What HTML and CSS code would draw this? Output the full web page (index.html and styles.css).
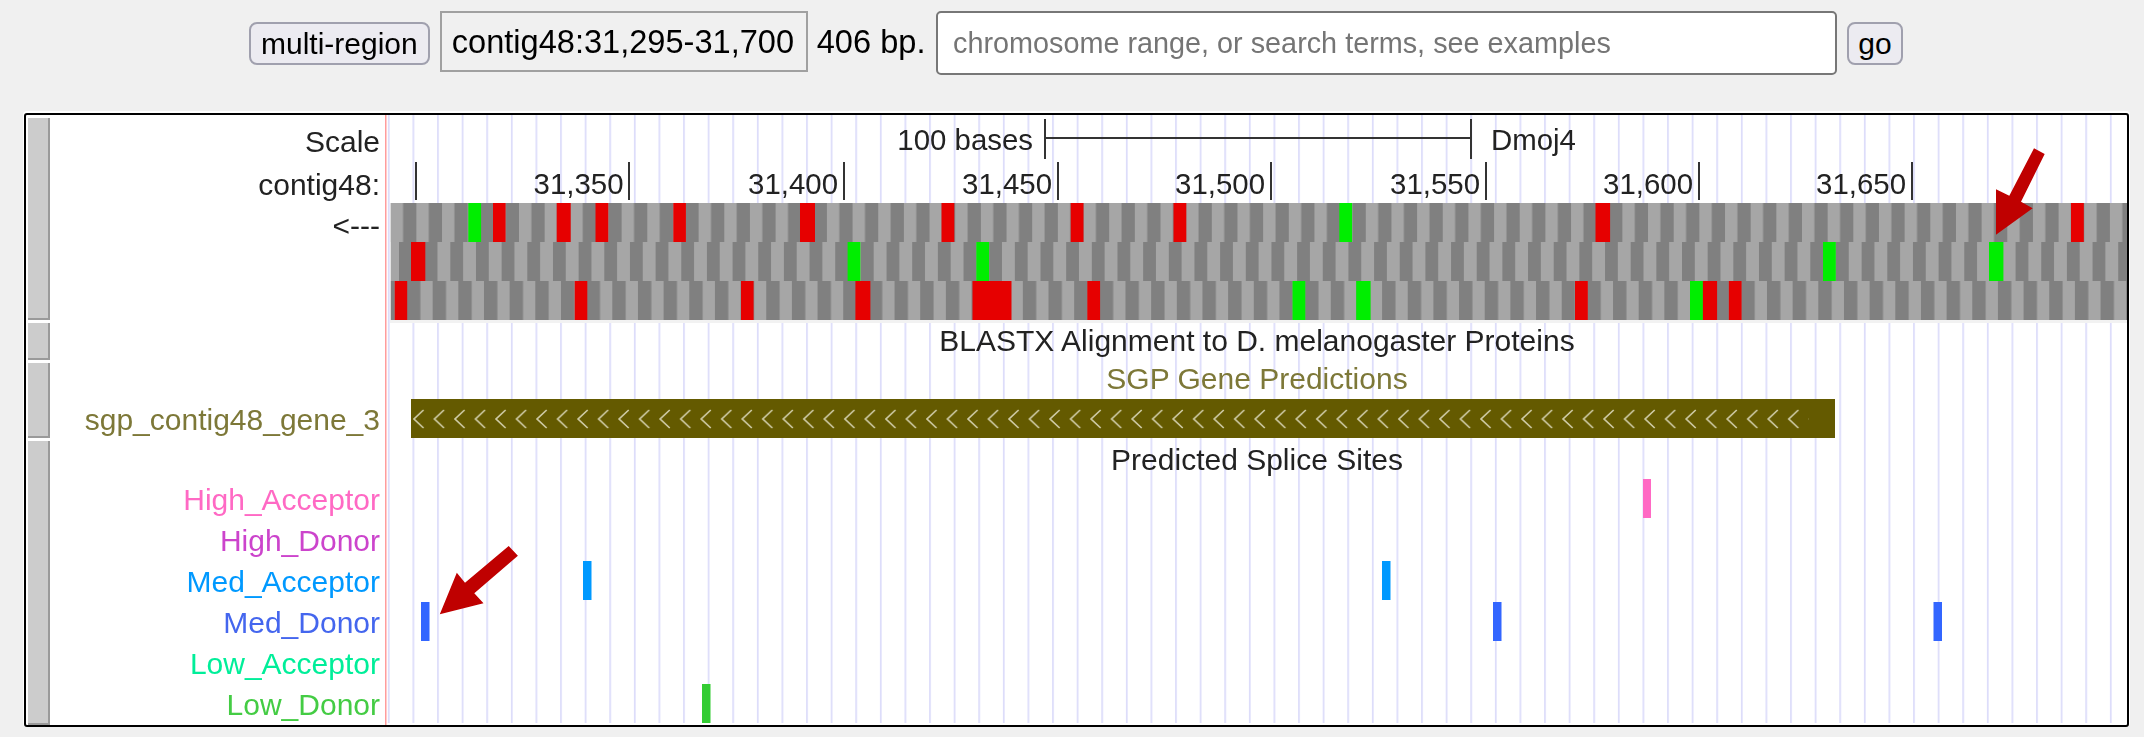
FILE: index.html
```html
<!doctype html>
<html>
<head>
<meta charset="utf-8">
<title>Genome browser</title>
<link rel="stylesheet" href="styles.css">
</head>
<body>

<form class="position-bar">
  <button type="button" class="btn">multi-region</button>
  <span class="position">contig48:31,295-31,700</span>
  <span class="size">406 bp.</span>
  <input class="search" type="text" placeholder="chromosome range, or search terms, see examples">
  <button type="button" class="btn go">go</button>
</form>

<div class="browser">
  <div class="side">
    <div class="side-btn h-base"></div>
    <div class="side-btn h-blastx"></div>
    <div class="side-btn h-sgp"></div>
    <div class="side-btn h-splice"></div>
  </div>

  <div class="labels">
    <div class="label first">Scale</div>
    <div class="label">contig48:</div>
    <div class="label">&lt;---</div>
    <div class="label gene-label">sgp_contig48_gene_3</div>
    <div class="label high-acc splice-start">High_Acceptor</div>
    <div class="label high-don">High_Donor</div>
    <div class="label med-acc">Med_Acceptor</div>
    <div class="label med-don">Med_Donor</div>
    <div class="label low-acc">Low_Acceptor</div>
    <div class="label low-don">Low_Donor</div>
  </div>

  <!-- viewBox uses the page's own coordinates, makes measuring easier -->
  <svg class="tracks" width="1742" height="610" viewBox="385 115 1742 610">
    <defs>
      <pattern id="guides" patternUnits="userSpaceOnUse" x="412.5" y="0" width="24.6" height="10">
        <rect width="1.7" height="10" fill="#dcdcfa"/>
      </pattern>
      <pattern id="frame1" patternUnits="userSpaceOnUse" x="390.7" y="203" width="25.66" height="39">
        <rect width="25.66" height="39" fill="#808080"/>
        <rect width="12.4" height="39" fill="#a6a6a6"/>
      </pattern>
      <pattern id="frame2" patternUnits="userSpaceOnUse" x="399" y="242" width="25.66" height="39">
        <rect width="25.66" height="39" fill="#a6a6a6"/>
        <rect width="12.8" height="39" fill="#808080"/>
      </pattern>
      <pattern id="frame3" patternUnits="userSpaceOnUse" x="407" y="281" width="25.66" height="39">
        <rect width="25.66" height="39" fill="#a6a6a6"/>
        <rect width="13.4" height="39" fill="#808080"/>
      </pattern>
      <pattern id="chevrons" patternUnits="userSpaceOnUse" x="413" y="399" width="20.52" height="39">
        <path d="M10.5 11 1 20l9.5 9" fill="none" stroke="#d0cca8" stroke-width="1.6"/>
      </pattern>
    </defs>

    <rect class="guides" x="385" y="115" width="1742" height="608"/>
    <rect class="base-line" x="385" y="115" width="1.5" height="610"/>

    <!-- scale bar -->
    <text class="txt end" x="1033" y="150">100 bases</text>
    <path class="rule" d="M1045 119v40M1045 138H1471M1471 119v40"/>
    <text class="txt" x="1491" y="150">Dmoj4</text>

    <!-- base position -->
    <path class="rule" d="M416 162v38M629 162v38M844 162v38M1058 162v38M1271 162v38M1486 162v38M1699 162v38M1912 162v38"/>
    <g class="ticks">
      <text class="txt end" x="623.5" y="194">31,350</text>
      <text class="txt end" x="838" y="194">31,400</text>
      <text class="txt end" x="1052" y="194">31,450</text>
      <text class="txt end" x="1265" y="194">31,500</text>
      <text class="txt end" x="1480" y="194">31,550</text>
      <text class="txt end" x="1693" y="194">31,600</text>
      <text class="txt end" x="1906" y="194">31,650</text>
    </g>

    <!-- codons -->
    <rect class="fade" x="390" y="320" width="1737" height="3"/>
    <rect x="390.7" y="203" width="1736.3" height="39" fill="url(#frame1)"/>
    <rect x="390.7" y="242" width="1736.3" height="39" fill="url(#frame2)"/>
    <rect x="390.7" y="281" width="1736.3" height="39" fill="url(#frame3)"/>

    <g class="stop">
      <rect x="493" y="203" width="12.6" height="39"/>
      <rect x="556.7" y="203" width="14" height="39"/>
      <rect x="595.5" y="203" width="12.8" height="39"/>
      <rect x="673.3" y="203" width="12.6" height="39"/>
      <rect x="800" y="203" width="15" height="39"/>
      <rect x="941.5" y="203" width="12.8" height="39"/>
      <rect x="1070.7" y="203" width="12.8" height="39"/>
      <rect x="1173.5" y="203" width="12.8" height="39"/>
      <rect x="1595.5" y="203" width="14.6" height="39"/>
      <rect x="2071" y="203" width="12.8" height="39"/>
      <rect x="411" y="242" width="14.3" height="39"/>
      <rect x="394.7" y="281" width="12.5" height="39"/>
      <rect x="574.7" y="281" width="12.6" height="39"/>
      <rect x="741" y="281" width="12.6" height="39"/>
      <rect x="855.4" y="281" width="15" height="39"/>
      <rect x="972.5" y="281" width="39" height="39"/>
      <rect x="1087.3" y="281" width="12.8" height="39"/>
      <rect x="1575" y="281" width="12.8" height="39"/>
      <rect x="1702.5" y="281" width="14.6" height="39"/>
      <rect x="1728.8" y="281" width="12.8" height="39"/>
    </g>
    <g class="start">
      <rect x="468.3" y="203" width="12.8" height="39"/>
      <rect x="1339.3" y="203" width="12.8" height="39"/>
      <rect x="847.6" y="242" width="12.8" height="39"/>
      <rect x="976.3" y="242" width="12.8" height="39"/>
      <rect x="1823" y="242" width="12.8" height="39"/>
      <rect x="1989" y="242" width="14.4" height="39"/>
      <rect x="1292.5" y="281" width="12.8" height="39"/>
      <rect x="1356.2" y="281" width="14.4" height="39"/>
      <rect x="1690" y="281" width="12.8" height="39"/>
    </g>

    <text class="txt mid" x="1257" y="351">BLASTX Alignment to D. melanogaster Proteins</text>
    <text class="txt mid sgp" x="1257" y="389">SGP Gene Predictions</text>

    <rect class="gene" x="411" y="399" width="1424" height="39"/>
    <rect x="413" y="399" width="1395.4" height="39" fill="url(#chevrons)"/>

    <text class="txt mid" x="1257" y="470">Predicted Splice Sites</text>

    <!-- splice sites -->
    <rect class="site-high-acc" x="1643" y="479" width="8" height="39"/>
    <g class="site-med-acc">
      <rect x="583" y="561" width="8.5" height="39"/>
      <rect x="1382" y="561" width="8.5" height="39"/>
    </g>
    <g class="site-med-don">
      <rect x="421" y="602" width="8.5" height="39"/>
      <rect x="1493" y="602" width="8.5" height="39"/>
      <rect x="1933.5" y="602" width="8.5" height="39"/>
    </g>
    <rect class="site-low-don" x="702" y="684" width="8.5" height="39"/>

    <!-- arrows added on top of the screenshot -->
    <polygon class="arrow" points="2034,148.3 2044.7,154 2021,201.7 2032.7,208.3 1996,234.7 1996,189.3 2009.3,195.7"/>
    <polygon class="arrow" points="508.7,546 517.9,555.7 474.3,593.3 483.5,603.3 439.8,614.3 456.8,572.7 465,582.7"/>
  </svg>
</div>

</body>
</html>
```

FILE: styles.css
```css
body {
  margin: 0;
  background-color: #f0f0f0;
  font-family: "Liberation Sans", Arial, sans-serif;
  color: #000;
}

/* the reference is a scaled up screenshot, everything is a little soft */
.position-bar,
.browser {
  filter: blur(0.5px);
}

.position-bar {
  display: flex;
  align-items: flex-start;
  box-sizing: border-box;
  width: 1903px;
  height: 113px;
  padding: 11px 0 0 249px;
}

.btn {
  box-sizing: border-box;
  height: 43px;
  margin-top: 11px;
  padding: 0 10px;
  font: 30px "Liberation Sans", Arial, sans-serif;
  color: #000;
  background-color: #ecebf1;
  border: 2px solid #a0a0ae;
  border-radius: 8px;
}

.btn.go {
  width: 56px;
  padding: 0;
}

.position {
  box-sizing: border-box;
  width: 368px;
  height: 61px;
  margin-left: 10px;
  padding: 0 10px;
  font-size: 32.6px;
  line-height: 57px;
  white-space: nowrap;
  border: 2px solid #a0a0a0;
}

.size {
  margin-left: 9px;
  font-size: 32.6px;
  line-height: 61px;
  white-space: nowrap;
}

.search {
  box-sizing: border-box;
  width: 901px;
  height: 64px;
  margin: 0 10px 0 auto;
  padding: 0 15px;
  font: 28.8px "Liberation Sans", Arial, sans-serif;
  background-color: #fff;
  border: 2px solid #777;
  border-radius: 5px;
  outline: none;
}

.search::placeholder {
  color: #757575;
  opacity: 1;
}

.browser {
  display: flex;
  box-sizing: border-box;
  width: 2105px;
  height: 614px;
  margin-left: 24px;
  background-color: #fff;
  border: 2px solid #000;
  border-radius: 3px;
  box-shadow: 0 -1px 0 1px #fff;
  overflow: hidden;
}

.side {
  display: flex;
  flex-direction: column;
  gap: 3px;
  flex: none;
  box-sizing: border-box;
  width: 24px;
  padding: 3px 0 0 2px;
}

.side-btn {
  box-sizing: border-box;
  background-color: #ccc;
  border-right: 2px solid #9a9a9a;
  border-bottom: 2px solid #9a9a9a;
}

.h-base { height: 202px; }
.h-blastx { height: 37px; }
.h-sgp { height: 76px; }
.h-splice { height: 284px; }

.labels {
  flex: none;
  width: 330px;
  margin-right: 5px;
  padding-top: 6px;
  font-size: 30px;
  color: #222;
  text-align: right;
}

.label {
  height: 41px;
  line-height: 41px;
  white-space: nowrap;
}

.label.first { height: 43px; }
.gene-label { margin-top: 153px; color: #7d7838; }
.splice-start { margin-top: 39px; }

.high-acc { color: #ff69c4; }
.high-don { color: #cc44cc; }
.med-acc { color: #0099ff; }
.med-don { color: #4466ee; }
.low-acc { color: #00ee99; }
.low-don { color: #44cc44; }

.tracks {
  flex: none;
  display: block;
}

.guides { fill: url(#guides); }
.base-line { fill: #ff9c9c; }
.fade { fill: #f2f2f2; }
.rule { fill: none; stroke: #333; stroke-width: 2; }

.txt {
  font: 29.4px "Liberation Sans", Arial, sans-serif;
  fill: #222;
}
.txt.end { text-anchor: end; }
.txt.mid { font-size: 30px; text-anchor: middle; }
.txt.sgp { fill: #7d7838; }

.stop { fill: #e60000; }
.start { fill: #00ee00; }
.gene { fill: #645a00; }

.site-high-acc { fill: #ff69c4; }
.site-med-acc { fill: #0099ff; }
.site-med-don { fill: #3366ff; }
.site-low-don { fill: #33cc33; }

.arrow { fill: #bf0000; }
```
